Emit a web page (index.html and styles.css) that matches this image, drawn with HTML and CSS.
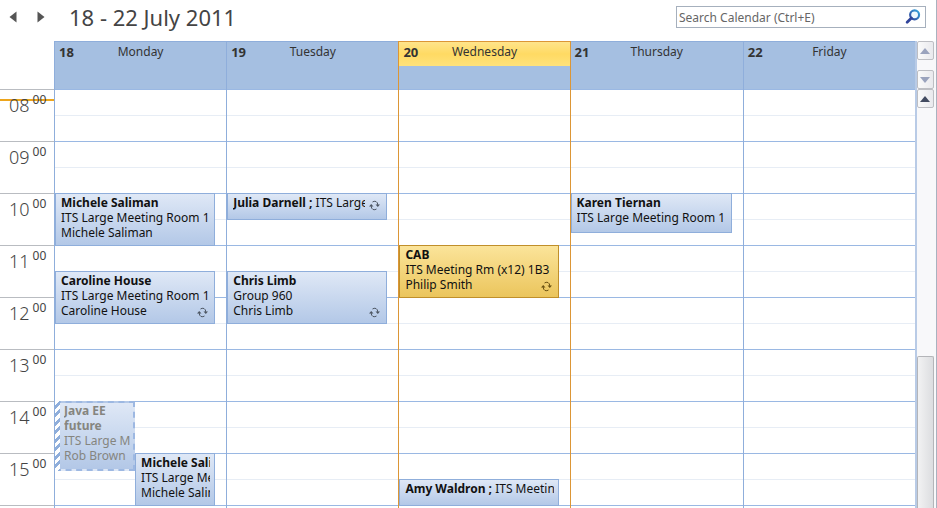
FILE: index.html
```html
<!DOCTYPE html>
<html lang="en">
<head>
<meta charset="utf-8">
<meta name="viewport" content="width=device-width, initial-scale=1">
<title>Calendar</title>
<link rel="stylesheet" href="styles.css">
</head>
<body>
<svg class="symbols" aria-hidden="true">
  <symbol id="recur" viewBox="0 0 11 11">
    <path d="M3.500 2Q5 .800 7 1.500 8.800 2.500 8.800 5M7.500 9Q6 10.200 4 9.500 2.200 8.500 2.200 6" fill="none" stroke="currentColor" stroke-width="1"/>
    <path d="M6.500 4.500h4.500L8.800 7zM0 6.500h4.500L2.200 4z" fill="currentColor"/>
  </symbol>
</svg>
<main class="app">
  <header class="toolbar">
    <nav class="pager">
      <button class="page" type="button" aria-label="Back"><svg viewBox="0 0 8 12"><path d="M7.500.5v11L.5 6z"/></svg></button>
      <button class="page" type="button" aria-label="Forward"><svg viewBox="0 0 8 12"><path d="M.5.5v11L7.500 6z"/></svg></button>
    </nav>
    <h1 class="range">18 - 22 July 2011</h1>
    <form class="search">
      <input class="query" type="text" aria-label="Search Calendar" placeholder="Search Calendar (Ctrl+E)">
      <button class="find" type="button" aria-label="Search">
        <svg viewBox="0 0 15 15"><defs><linearGradient id="lens" x1="0" y1="1" x2="1" y2="0"><stop offset="0" stop-color="#30449b"/><stop offset="1" stop-color="#35a5dd"/></linearGradient></defs><circle cx="9" cy="5.500" r="4.200" fill="#eef8fd" stroke="url(#lens)" stroke-width="2"/><path d="M6 8.500L2 12.500" stroke="#30449b" stroke-width="2.600" stroke-linecap="round"/></svg>
      </button>
    </form>
  </header>
  <div class="calendar">
    <div class="gutter">
      <div class="corner"></div>
      <div class="hours">
        <div class="hour now">08<sup>00</sup></div>
        <div class="hour">09<sup>00</sup></div>
        <div class="hour">10<sup>00</sup></div>
        <div class="hour">11<sup>00</sup></div>
        <div class="hour">12<sup>00</sup></div>
        <div class="hour">13<sup>00</sup></div>
        <div class="hour">14<sup>00</sup></div>
        <div class="hour">15<sup>00</sup></div>
        <div class="hour"></div>
      </div>
    </div>
    <section class="day">
      <h2 class="head"><span class="bar"><b class="num">18</b><span class="name">Monday</span></span></h2>
      <div class="slots">
        <article class="event at10 long"><b>Michele Saliman</b><p>ITS Large Meeting Room 1</p><p>Michele Saliman</p></article>
        <article class="event at1130 long"><b>Caroline House</b><p>ITS Large Meeting Room 1</p><p>Caroline House</p><svg class="recur"><use href="#recur"/></svg></article>
        <article class="event at14 first tentative"><b>Java EE<br>future</b><p>ITS Large M</p><p>Rob Brown</p></article>
        <article class="event at15 long second"><b>Michele Saliman</b><p>ITS Large Meeting</p><p>Michele Saliman</p></article>
      </div>
    </section>
    <section class="day">
      <h2 class="head"><span class="bar"><b class="num">19</b><span class="name">Tuesday</span></span></h2>
      <div class="slots">
        <article class="event at10 short repeats"><p><b>Julia Darnell ;</b> ITS Large Meeting</p><svg class="recur"><use href="#recur"/></svg></article>
        <article class="event at1130 long"><b>Chris Limb</b><p>Group 960</p><p>Chris Limb</p><svg class="recur"><use href="#recur"/></svg></article>
      </div>
    </section>
    <section class="day today">
      <h2 class="head"><span class="bar"><b class="num">20</b><span class="name">Wednesday</span></span></h2>
      <div class="slots">
        <article class="event at11 long gold"><b>CAB</b><p>ITS Meeting Rm (x12) 1B3</p><p>Philip Smith</p><svg class="recur"><use href="#recur"/></svg></article>
        <article class="event at1530 short"><p><b>Amy Waldron ;</b> ITS Meeting Room</p></article>
      </div>
    </section>
    <section class="day after">
      <h2 class="head"><span class="bar"><b class="num">21</b><span class="name">Thursday</span></span></h2>
      <div class="slots">
        <article class="event at10 medium"><b>Karen Tiernan</b><p>ITS Large Meeting Room 1</p></article>
      </div>
    </section>
    <section class="day">
      <h2 class="head"><span class="bar"><b class="num">22</b><span class="name">Friday</span></span></h2>
      <div class="slots"></div>
    </section>
    <div class="scroll">
      <div class="allday">
        <button class="step faint" type="button" aria-label="Scroll all-day events up"><svg viewBox="0 0 10 6"><path d="M0 6l5-6 5 6z"/></svg></button>
        <button class="step faint" type="button" aria-label="Scroll all-day events down"><svg viewBox="0 0 10 6"><path d="M0 0l5 6 5-6z"/></svg></button>
      </div>
      <button class="step" type="button" aria-label="Scroll up"><svg viewBox="0 0 10 6"><path d="M0 6l5-6 5 6z"/></svg></button>
      <div class="track"><div class="thumb"></div></div>
    </div>
  </div>
</main>
</body>
</html>
```
FILE: styles.css
```css
* { box-sizing: border-box; }

body {
  margin: 0;
  background: #fff;
  color: #111;
  font: 12px/15px "Noto Sans", "Open Sans", sans-serif;
}

h1, h2, p { margin: 0; font-weight: 400; }

button { border: 0; padding: 0; background: none; }

.symbols { position: absolute; width: 0; height: 0; }

.app {
  display: flex;
  flex-direction: column;
  height: 100vh;
  overflow: hidden;
  border-right: 1px solid #a9b2bf;
}

.toolbar {
  display: flex;
  flex: none;
  align-items: center;
  height: 41px;
  padding: 0 10px 7px 9px;
}

.pager { display: flex; gap: 20px; }
.page { display: flex; width: 8px; height: 12px; }
.page svg { width: 8px; height: 12px; fill: #555; }

.range {
  margin-left: 24px;
  color: #444;
  font-size: 22px;
  line-height: 28px;
}

.search {
  display: flex;
  align-items: center;
  width: 250px;
  height: 22px;
  margin-left: auto;
  padding-right: 4px;
  border: 1px solid #a6b0bd;
}

.query {
  flex: 1;
  min-width: 0;
  padding: 0 2px;
  border: 0;
  outline: 0;
  color: #555;
  font: inherit;
}

.query::placeholder { color: #666; opacity: 1; }
.find { display: flex; }
.find svg { width: 16px; height: 16px; }

.calendar {
  display: grid;
  flex: 1;
  grid-template-rows: minmax(0, 1fr);
  grid-template-columns: 54px repeat(5, minmax(0, 1fr)) 21px;
  min-height: 0;
  overflow: hidden;
}

.corner { height: 48px; }

.hour {
  display: flex;
  align-items: flex-start;
  gap: 3px;
  height: 52px;
  padding: 2px 0 0 9px;
  border-top: 1px solid #b9bcc1;
  color: #444;
  font-size: 18px;
  font-weight: 300;
  line-height: 26px;
}

.hour sup {
  font-size: 12px;
  font-weight: 400;
  line-height: 15px;
  vertical-align: top;
}

.now { background: linear-gradient(#eda51c, #eda51c) 0 9px / 100% 2px no-repeat; }

.day {
  display: flex;
  flex-direction: column;
  border-left: 1px solid #8faedb;
}

.head {
  flex: none;
  height: 48px;
  border-top: 1px solid #8faedb;
  background: #a5bfe1;
  color: #333;
  font-size: 12px;
}

.bar {
  display: grid;
  grid-template-columns: 32px 1fr 32px;
  height: 24px;
  padding-top: 2px;
  line-height: 16px;
}

.num { padding-left: 4px; font-size: 13px; }
.name { text-align: center; }

.today { border-right: 1px solid #dc9636; border-left-color: #dc9636; }
.after { border-left: 0; }
.today .head { border-top-color: #dc9636; }
.today .bar { background: linear-gradient(#ffe48b, #ffda63 50%, #ffe27a); }

.slots {
  display: grid;
  flex: 1;
  grid-template-columns: 1fr 1fr;
  grid-template-rows: repeat(36, 13px);
  min-height: 0;
  padding-right: 11px;
  overflow: hidden;
  background: repeating-linear-gradient(#9ab8e3 0 1px, #fff 1px 26px, #e7edf5 26px 27px, #fff 27px 52px);
}

.event {
  position: relative;
  grid-column: 1 / 3;
  min-width: 0;
  margin: 0 0 -1px;
  padding: 1px 4px 0 5px;
  border: 1px solid #8faedb;
  background: linear-gradient(#dfe8f6, #b3c8e7);
  white-space: nowrap;
}

.event > b, .event > p { display: block; overflow: hidden; }

.at10 { grid-row-start: 9; }
.at11 { grid-row-start: 13; }
.at1130 { grid-row-start: 15; }
.at14 { grid-row-start: 25; }
.at15 { grid-row-start: 29; }
.at1530 { grid-row-start: 31; }
.short { grid-row-end: span 2; }
.medium { grid-row-end: span 3; }
.long { grid-row-end: span 4; }
.first { grid-column: 1; }
.second { grid-column: 2; }
.repeats { padding-right: 21px; }

.recur {
  position: absolute;
  right: 6px;
  bottom: 5px;
  width: 11px;
  height: 11px;
  color: #4d5663;
}

.repeats .recur { bottom: 8px; }

.gold {
  border: 1px solid #c08f2a;
  background: linear-gradient(#fbe49a, #ebc55c);
}

.gold .recur { color: #6b5212; }

.tentative {
  grid-row-end: span 6;
  align-self: start;
  height: 70px;
  padding: 0 3px 0 9px;
  border: 2px dashed #9db8e2;
  border-left: 0;
  color: #85857f;
}

.tentative::before {
  position: absolute;
  inset: -2px auto -2px 0;
  width: 5px;
  background: repeating-linear-gradient(135deg, #fff 0 3px, #8faedb 3px 6px);
  content: "";
}

.scroll {
  display: flex;
  flex-direction: column;
  padding: 0 2px 0 0;
  border-left: 2px solid #b9cbe6;
  background: #f8f8fa;
}

.allday {
  display: flex;
  flex: none;
  flex-direction: column;
  justify-content: space-between;
  height: 48px;
}

.step {
  display: flex;
  flex: none;
  align-items: center;
  justify-content: center;
  height: 19px;
  border: 1px solid #bdbec3;
  border-radius: 2px;
  background: linear-gradient(90deg, #fafafa, #e9e9ed);
}

.step svg { width: 10px; height: 6px; fill: #424b60; }
.faint svg { fill: #9aa3bd; }

.track {
  display: flex;
  flex: 1;
  flex-direction: column;
  justify-content: flex-end;
}

.thumb {
  height: 38%;
  border: 1px solid #b4b5b9;
  border-bottom: 0;
  border-radius: 2px 2px 0 0;
  background: linear-gradient(90deg, #f2f2f3, #dcdde0);
}
```
